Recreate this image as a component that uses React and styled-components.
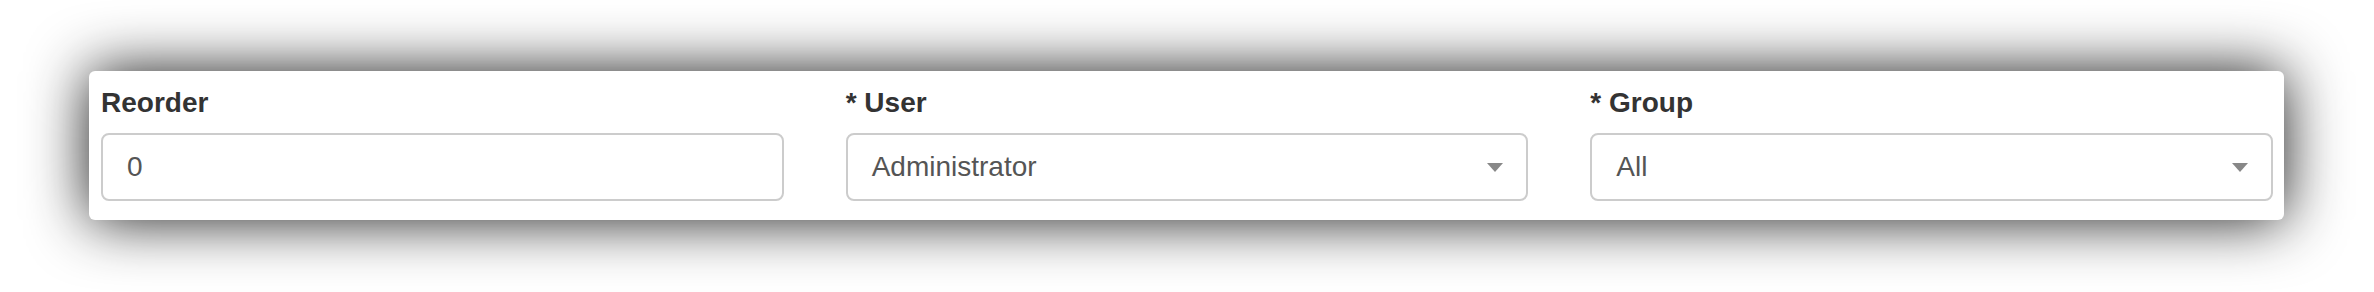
import React from 'react';
import styled, { createGlobalStyle } from 'styled-components';

const GlobalStyle = createGlobalStyle`
  html, body {
    margin: 0;
    padding: 0;
    background: #fff;
  }
  body {
    font-family: "Liberation Sans", Arial, sans-serif;
  }
`;

const Page = styled.div`
  padding: 71px 90px 72px 89px;
`;

const Card = styled.div`
  background: #fff;
  border-radius: 6px;
  box-shadow: 0 0 60px rgba(0, 0, 0, 0.9);
  padding: 12px 11px 19px 12px;
  display: grid;
  grid-template-columns: repeat(3, 1fr);
  column-gap: 62px;
`;

const Field = styled.div`
  display: flex;
  flex-direction: column;
`;

const Label = styled.label`
  font-size: 28px;
  line-height: 40px;
  font-weight: bold;
  color: #333;
  margin-bottom: 10px;
`;

const Box = styled.div`
  position: relative;
  height: 68px;
  box-sizing: border-box;
  border: 2px solid #ccc;
  border-radius: 8px;
  padding: 0 24px;
  display: flex;
  align-items: center;
  font-size: 28px;
  color: #555;
  background: #fff;
`;

const Caret = styled.span`
  position: absolute;
  right: 23px;
  top: 50%;
  margin-top: -4px;
  width: 0;
  height: 0;
  border-style: solid;
  border-width: 9px 8px 0 8px;
  border-color: #888 transparent transparent transparent;
`;

const fields = [
  { label: 'Reorder', value: '0', select: false },
  { label: '* User', value: 'Administrator', select: true },
  { label: '* Group', value: 'All', select: true },
];

export default function App() {
  return (
    <>
      <GlobalStyle />
      <Page>
        <Card>
          {fields.map((f) => (
            <Field key={f.label}>
              <Label>{f.label}</Label>
              <Box>
                {f.value}
                {f.select && <Caret />}
              </Box>
            </Field>
          ))}
        </Card>
      </Page>
    </>
  );
}
